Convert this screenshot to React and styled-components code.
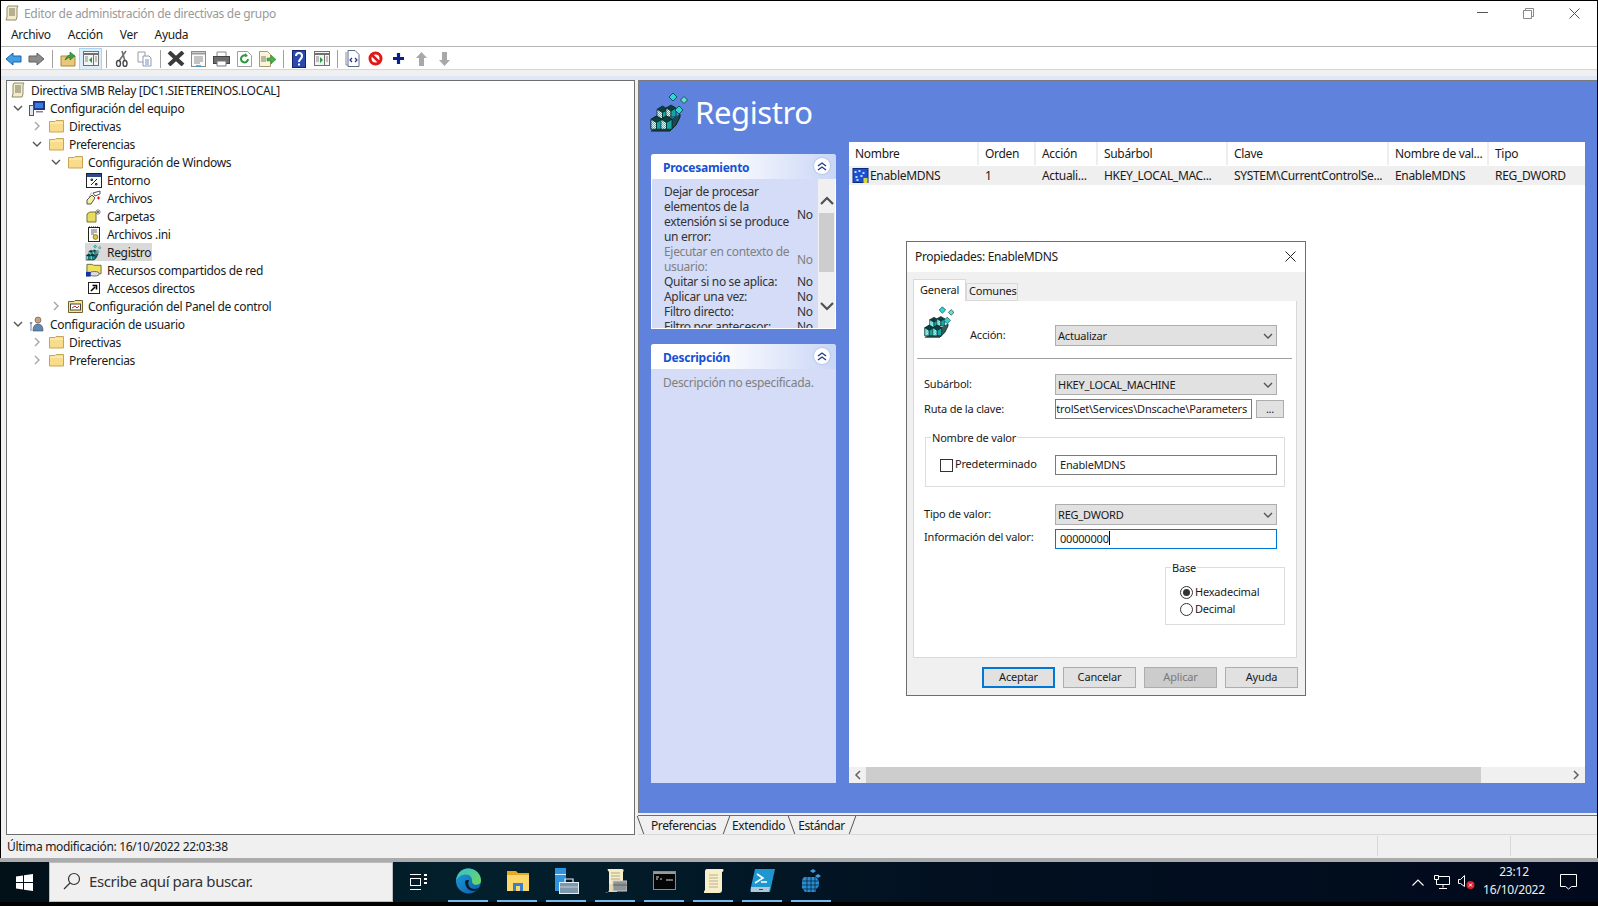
import React from "react";
import styled, { createGlobalStyle } from "styled-components";

const FONT = `"Noto Sans", "Open Sans", sans-serif`;

const Global = createGlobalStyle`
  html, body { margin: 0; padding: 0; background: #000; overflow: hidden; }
  * { box-sizing: border-box; }
  body { font-family: ${FONT}; font-size: 12px; color: #1a1a1a; }
`;

const Page = styled.div`
  position: relative;
  width: 1598px;
  height: 906px;
  background: #000;
  display: flex;
  flex-direction: column;
  letter-spacing: -0.32px;
`;

const Window = styled.div`
  height: 857px;
  margin: 1px 1px 0 1px;
  background: #f0f0f0;
  display: flex;
  flex-direction: column;
  flex: none;
`;

const TitleBar = styled.div`
  height: 23px;
  background: #fff;
  display: flex;
  align-items: center;
  padding: 1px 0 0 3px;
  gap: 4px;
  color: #999;
  flex: none;
`;

const WinControls = styled.div`
  margin-left: auto;
  display: flex;
  align-items: center;
`;

const WinControl = styled.div`
  width: 46px;
  display: flex;
  justify-content: center;
`;

const MenuBar = styled.div`
  height: 23px;
  background: #fff;
  border-bottom: 1px solid #b5b5b5;
  display: flex;
  align-items: center;
  padding: 0 0 2px 10px;
  gap: 17px;
  flex: none;
`;

const MenuItem = styled.span`
  font-size: 12px;
  color: #1a1a1a;
`;

const ToolBar = styled.div`
  height: 23px;
  background: #fff;
  border-bottom: 1px solid #d6d6d6;
  display: flex;
  align-items: center;
  padding: 1px 0 0 1px;
  flex: none;
`;

const ToolButton = styled.div`
  width: 23px;
  height: 22px;
  display: flex;
  align-items: center;
  justify-content: center;
  border: 1px solid ${(p) => (p.$active ? "#a8d4f5" : "transparent")};
  background: ${(p) => (p.$active ? "#dcedfb" : "transparent")};
`;

const ToolSep = styled.div`
  width: 1px;
  height: 18px;
  background: #a0a0a0;
  margin: 0 3px 0 4px;
`;

const Workspace = styled.div`
  height: 766px;
  flex: none;
  padding: 10px 0 0 5px;
  display: flex;
  background: linear-gradient(#f0f0f0 0 6px, #dfe8f4 6px 10px, #f0f0f0 10px);
`;

const TreePane = styled.div`
  width: 629px;
  height: 755px;
  background: #fff;
  border: 1px solid #6e6e6e;
  padding: 0 0 0 3px;
  flex: none;
`;

const TreeRowBox = styled.div`
  height: 18px;
  display: flex;
  align-items: center;
  padding-left: ${(p) => (p.$root ? 0 : p.$level * 19 + 3)}px;
  white-space: nowrap;
`;

const Chevron = styled.div`
  width: 10px;
  height: 18px;
  margin-right: 6px;
  display: flex;
  align-items: center;
  justify-content: center;
  flex: none;
`;

const TreeIconBox = styled.div`
  width: 16px;
  height: 16px;
  margin-right: 5px;
  display: flex;
  align-items: center;
  justify-content: center;
  flex: none;
`;

const SelectedWrap = styled.div`
  display: flex;
  align-items: center;
  height: 18px;
  margin-left: -1px;
  padding: 0 1px 0 1px;
  background: ${(p) => (p.$selected ? "#d9d9d9" : "transparent")};
`;

const RightColumn = styled.div`
  flex: 1;
  margin-left: 3px;
  display: flex;
  flex-direction: column;
`;

const BluePane = styled.div`
  height: 733px;
  border: 1px solid #7a7a7a;
  border-width: 1px 0 0 1px;
  background: #5f82dc;
  padding: 0 8px 0 11px;
  display: flex;
  flex-direction: column;
  flex: none;
`;

const Banner = styled.div`
  height: 61px;
  display: flex;
  align-items: center;
  gap: 5px;
  flex: none;
`;

const BannerTitle = styled.div`
  font-size: 31px;
  color: #fff;
  letter-spacing: -0.4px;
`;

const Columns = styled.div`
  display: flex;
  height: 641px;
  padding-left: 1px;
  flex: none;
`;

const Side = styled.div`
  width: 185px;
  padding-top: 12px;
  display: flex;
  flex-direction: column;
  gap: 15px;
  flex: none;
`;

const SideCard = styled.div`
  display: flex;
  flex-direction: column;
  height: ${(p) => p.$h}px;
  background: #d4dcf7;
  border-radius: 3px 3px 0 0;
  overflow: hidden;
  flex: none;
`;

const SideHeader = styled.div`
  height: 25px;
  background: linear-gradient(90deg, #fff 35%, #c9d6f6);
  display: flex;
  align-items: center;
  justify-content: space-between;
  padding: 2px 6px 0 12px;
  color: #1550d6;
  font-weight: 700;
  letter-spacing: -0.25px;
  flex: none;
`;

const Collapse = styled.div`
  width: 16px;
  height: 16px;
  border-radius: 50%;
  background: #fff;
  box-shadow: 0 0 2px #8aa0d8;
  display: flex;
  align-items: center;
  justify-content: center;
  margin-top: -4px;
`;

const SideBody = styled.div`
  flex: 1;
  display: flex;
  overflow: hidden;
  border-left: 1px solid #fff;
  border-right: 1px solid #fff;
  border-bottom: 1px solid #fff;
`;

const PropList = styled.div`
  width: 166px;
  padding: 5px 0 0 12px;
  line-height: 15px;
  overflow: hidden;
  flex: none;
`;

const PropRow = styled.div`
  display: flex;
  align-items: center;
  color: ${(p) => (p.$muted ? "#808080" : "#333")};
`;

const PropName = styled.div`
  width: 133px;
  flex: none;
`;

const SideScroll = styled.div`
  flex: 1;
  background: #f0f0f0;
  display: flex;
  flex-direction: column;
  align-items: center;
`;

const ScrollArrow = styled.div`
  height: 34px;
  display: flex;
  align-items: center;
  justify-content: center;
  flex: none;
  padding-top: ${(p) => p.$pt}px;
`;

const SideThumb = styled.div`
  width: 15px;
  height: 59px;
  background: #cdcdcd;
  flex: none;
`;

const DescText = styled.div`
  padding: 5px 0 0 12px;
  color: #808080;
`;

const ListPane = styled.div`
  width: 736px;
  margin-left: 13px;
  height: 641px;
  background: #fff;
  display: flex;
  flex-direction: column;
  flex: none;
`;

const COLS = "130px 57px 62px 130px 161px 100px 1fr";

const HeadGrid = styled.div`
  display: grid;
  grid-template-columns: ${COLS};
  height: 24px;
  padding-bottom: 1px;
  flex: none;
`;

const HeadCell = styled.div`
  display: flex;
  align-items: center;
  padding-left: 6px;
  border-right: 2px solid #eeeeee;
  white-space: nowrap;
  &:last-child { border-right: 0; }
`;

const DataGrid = styled.div`
  display: grid;
  grid-template-columns: ${COLS};
  height: 19px;
  background: #efefef;
  flex: none;
`;

const DataCell = styled.div`
  display: flex;
  align-items: center;
  padding-left: 6px;
  white-space: nowrap;
`;

const FirstCell = styled(DataCell)`
  padding-left: 3px;
  gap: 1px;
`;

const ListFill = styled.div`
  flex: 1;
`;

const HScroll = styled.div`
  height: 16px;
  background: #f0f0f0;
  display: flex;
  align-items: center;
  flex: none;
`;

const HArrow = styled.div`
  width: 17px;
  height: 16px;
  display: flex;
  align-items: center;
  justify-content: center;
  flex: none;
`;

const HThumb = styled.div`
  width: 615px;
  height: 16px;
  background: #cdcdcd;
`;

const Fill = styled.div`
  flex: 1;
`;

const TabStrip = styled.div`
  height: 20px;
  margin-top: 2px;
  border-top: 1px solid #6e6e6e;
  border-bottom: 1px solid #d8d8d8;
  display: flex;
  padding-left: 2px;
  letter-spacing: -0.4px;
  flex: none;
`;

const BottomTab = styled.div`
  position: relative;
  height: 18px;
  padding: 0 ${(p) => p.$pad}px;
  display: flex;
  align-items: center;
  &::before {
    content: "";
    position: absolute;
    right: -1px;
    top: 0;
    width: 1px;
    height: 18px;
    background: #555;
    transform: skewX(${(p) => p.$skew}deg);
  }
`;

const FirstTabEdge = styled.div`
  width: 1px;
  height: 18px;
  background: #555;
  transform: skewX(20deg);
  flex: none;
`;

const StatusBar = styled.div`
  height: 22px;
  display: flex;
  align-items: center;
  padding: 0 0 2px 6px;
  flex: none;
`;

const StatusSep = styled.div`
  width: 1px;
  height: 20px;
  background: #d8d8d8;
  margin-left: ${(p) => p.$ml}px;
`;

const Divider = styled.div`
  height: 4px;
  background: #ababab;
  flex: none;
`;

/* the taskbar */
const TaskBar = styled.div`
  height: 40px;
  background: linear-gradient(90deg, #021018, #02202c 30%, #021020 60%, #010a1c);
  display: flex;
  align-items: stretch;
  color: #fff;
  letter-spacing: 0;
  flex: none;
`;

const StartButton = styled.div`
  width: 49px;
  display: flex;
  align-items: center;
  justify-content: center;
  flex: none;
`;

const SearchBox = styled.div`
  width: 344px;
  background: #f0f0f0;
  border: 1px solid #bdbdbd;
  color: #333;
  display: flex;
  align-items: center;
  gap: 8px;
  padding: 0 0 2px 13px;
  font-size: 15px;
  letter-spacing: -0.42px;
  flex: none;
`;

const TaskViewBtn = styled.div`
  width: 51px;
  display: flex;
  align-items: center;
  justify-content: center;
  flex: none;
`;

const AppSlot = styled.div`
  position: relative;
  width: 49px;
  display: flex;
  align-items: center;
  justify-content: center;
  padding-bottom: 3px;
  flex: none;
  &::after {
    content: "";
    position: absolute;
    left: 4px;
    right: 5px;
    bottom: 0;
    height: 2px;
    background: #76b9ed;
  }
`;

const Tray = styled.div`
  margin-left: auto;
  display: flex;
  align-items: center;
  padding-right: 21px;
`;

const Clock = styled.div`
  width: 70px;
  text-align: center;
  font-size: 12px;
  line-height: 18px;
  letter-spacing: -0.2px;
  color: #eee;
  margin: 0 11px 2px 4px;
`;

const TrayIcon = styled.div`
  margin-right: ${(p) => p.$mr || 0}px;
  display: flex;
`;

/* the floating properties dialog */
const Dialog = styled.div`
  position: absolute;
  left: 906px;
  top: 241px;
  width: 400px;
  height: 455px;
  background: #f0f0f0;
  border: 1px solid #6e6e6e;
  display: flex;
  flex-direction: column;
`;

const DialogTitle = styled.div`
  height: 30px;
  background: #fff;
  display: flex;
  align-items: center;
  justify-content: space-between;
  padding: 0 9px 2px 8px;
  flex: none;
`;

const DialogTabs = styled.div`
  display: flex;
  align-items: flex-end;
  background: #f0f0f0;
  padding: 7px 0 0 6px;
  height: 29px;
  font-size: 11px;
  letter-spacing: -0.2px;
  flex: none;
  position: relative;
  z-index: 1;
`;

const DlgTab = styled.div`
  height: ${(p) => (p.$active ? 22 : 18)}px;
  width: ${(p) => (p.$active ? 53 : 52)}px;
  padding: ${(p) => (p.$active ? "0 0 3px 6px" : "0 0 3px 2px")};
  background: ${(p) => (p.$active ? "#fff" : "#f0f0f0")};
  border: 1px solid #d9d9d9;
  border-bottom: ${(p) => (p.$active ? "0" : "1px solid #d9d9d9")};
  display: flex;
  align-items: center;
`;

const DlgPage = styled.div`
  margin: -1px 8px 0 6px;
  height: 358px;
  background: #fff;
  border: 1px solid #d9d9d9;
  font-size: 11px;
  letter-spacing: -0.2px;
  flex: none;
`;

const FormRow = styled.div`
  display: flex;
  align-items: ${(p) => p.$align || "center"};
  margin-top: ${(p) => p.$mt}px;
  padding-left: 10px;
  height: ${(p) => p.$h}px;
`;

const FormLabel = styled.div`
  width: 131px;
  padding-bottom: 2px;
  flex: none;
  white-space: nowrap;
`;

const ActionLabel = styled.div`
  width: 85px;
  flex: none;
  margin-bottom: 4px;
  margin-left: 14px;
`;

const ActionIcon = styled.div`
  width: 32px;
  height: 36px;
  margin-bottom: 4px;
  flex: none;
`;

const SelectBox = styled.div`
  width: 222px;
  height: 21px;
  background: #e1e1e1;
  border: 1px solid #adadad;
  display: flex;
  align-items: center;
  justify-content: space-between;
  padding: 0 3px 0 2px;
  flex: none;
`;

const TextField = styled.div`
  width: ${(p) => p.$w}px;
  height: 20px;
  background: #fff;
  border: 1px solid ${(p) => (p.$focus ? "#0078d7" : "#7a7a7a")};
  display: flex;
  align-items: center;
  justify-content: ${(p) => (p.$end ? "flex-end" : "flex-start")};
  padding: 0 4px 2px 4px;
  overflow: hidden;
  white-space: nowrap;
  flex: none;
`;

const Caret = styled.span`
  width: 1px;
  height: 14px;
  background: #000;
`;

const DotsButton = styled.div`
  width: 28px;
  height: 18px;
  margin-left: 4px;
  background: #e1e1e1;
  border: 1px solid #adadad;
  display: flex;
  align-items: center;
  justify-content: center;
  padding-bottom: 2px;
`;

const Rule = styled.div`
  height: 1px;
  margin: 12px 4px 0 3px;
  background: #a0a0a0;
`;

const GroupBox = styled.div`
  position: relative;
  width: ${(p) => p.$w}px;
  height: ${(p) => p.$h}px;
  margin-top: ${(p) => p.$mt}px;
  margin-left: ${(p) => p.$ml}px;
  border: 1px solid #dcdcdc;
`;

const GroupLegend = styled.div`
  position: absolute;
  left: 5px;
  top: -8px;
  padding: 0 1px;
  background: #fff;
  line-height: 16px;
`;

const NameRow = styled.div`
  display: flex;
  align-items: center;
  padding: 17px 0 0 14px;
`;

const CheckBox = styled.div`
  width: 13px;
  height: 13px;
  border: 1px solid #333;
  background: #fff;
  flex: none;
`;

const CheckLabel = styled.div`
  width: 100px;
  margin-left: 2px;
  margin-top: -4px;
  flex: none;
`;

const RadioRow = styled.div`
  display: flex;
  align-items: center;
  height: 17px;
  gap: 2px;
  padding-left: 14px;
`;

const RadioLabel = styled.span`
  margin-top: -3px;
`;

const RadioStack = styled.div`
  padding-top: 16px;
`;

const Radio = styled.div`
  width: 13px;
  height: 13px;
  border-radius: 50%;
  border: 1px solid #333;
  background: #fff;
  display: flex;
  align-items: center;
  justify-content: center;
  flex: none;
`;

const RadioDot = styled.div`
  width: 7px;
  height: 7px;
  border-radius: 50%;
  background: #333;
`;

const ButtonRow = styled.div`
  display: flex;
  justify-content: flex-end;
  gap: 8px;
  padding: 9px 7px 0 0;
  font-size: 11px;
  letter-spacing: -0.15px;
`;

const DlgButton = styled.div`
  width: 73px;
  height: 21px;
  background: ${(p) => (p.$disabled ? "#cccccc" : "#e1e1e1")};
  border: ${(p) => (p.$primary ? "2px solid #0078d7" : "1px solid #adadad")};
  color: ${(p) => (p.$disabled ? "#7a7a7a" : "#1a1a1a")};
  display: flex;
  align-items: center;
  justify-content: center;
  padding-bottom: 3px;
`;

/* drawings */
const ChevronDown = ({ size = 10, color = "#555" }) => (
  <svg width={size} height={size} viewBox="0 0 10 10"><path d="M1 3l4 4 4-4" fill="none" stroke={color} strokeWidth="1.4" /></svg>
);
const ChevronRight = ({ color = "#a6a6a6" }) => (
  <svg width="10" height="10" viewBox="0 0 10 10"><path d="M3 1l4 4-4 4" fill="none" stroke={color} strokeWidth="1.4" /></svg>
);

const Folder = () => (
  <svg width="15" height="14" viewBox="0 0 15 14">
    <path d="M.5 2.500V13h14V1.500H7L6 2.500z" fill="#f8dc8c" stroke="#c8a552" />
    <path d="M1 4h13" stroke="#fff3c8" />
  </svg>
);

const Scroll = ({ w = 16, h = 16 }) => (
  <svg width={w} height={h} viewBox="0 0 16 16">
    <path d="M4 1h10l-1 2v9l-1 3H2l1-3V3z" fill="#f4ecc8" stroke="#8f8a6a" />
    <path d="M5 4h6M5 6h6M5 8h6M5 10h6" stroke="#77745f" />
  </svg>
);

const Cube = ({ x, y, s = 10 }) => (
  <g stroke="#04201f" strokeWidth="0.7">
    <path d={`M${x} ${y + s * 0.3}L${x + s * 0.5} ${y}L${x + s} ${y + s * 0.3}L${x + s * 0.5} ${y + s * 0.6}Z`} fill="#0d3f40" />
    <path d={`M${x} ${y + s * 0.3}L${x + s * 0.5} ${y + s * 0.6}V${y + s * 1.2}H${x}Z`} fill="url(#regDither)" />
    <path d={`M${x + s} ${y + s * 0.3}L${x + s * 0.5} ${y + s * 0.6}V${y + s * 1.2}H${x + s}Z`} fill="#12a5a2" />
  </g>
);

const Diamond = ({ x, y, s = 7, fill = "#2fd6d2" }) => (
  <path d={`M${x} ${y - s / 2}L${x + s / 2} ${y}L${x} ${y + s / 2}L${x - s / 2} ${y}Z`} fill={fill} stroke="#0a4a4c" strokeWidth="0.9" />
);

const Registry = ({ size = 40 }) => (
  <svg width={size} height={size} viewBox="0 0 40 40">
    <defs>
      <pattern id="regDither" width="2" height="2" patternUnits="userSpaceOnUse">
        <rect width="2" height="2" fill="#27c9c4" />
        <rect width="1" height="1" fill="#d6fbf8" />
        <rect x="1" y="1" width="1" height="1" fill="#d6fbf8" />
      </pattern>
    </defs>
    <Cube x={7} y={14} s={11} />
    <Cube x={16} y={13} s={10} />
    <Cube x={1} y={24} s={11} />
    <Cube x={11} y={24} s={11} />
    <path d="M1 39h19l6-6 4-8V22" fill="#0d3f40" fillOpacity=".85" stroke="#04201f" strokeWidth="1" />
    <Cube x={1} y={24} s={11} />
    <Cube x={11} y={24} s={11} />
    <Diamond x={29} y={18} s={8} />
    <Diamond x={23} y={5} s={8} />
    <Diamond x={34} y={8} s={7} fill="#6fdccd" />
  </svg>
);

const RegValueIcon = () => (
  <svg width="17" height="16" viewBox="0 0 16 16">
    <rect x="0.5" y="0.5" width="15" height="14" fill="#1d4fd0" stroke="#0c2a80" />
    <path d="M2 3h2v2H2zM6 2h2v2H6zM10 4h2v2h-2zM3 8h2v2H3zM8 7h2v2H8zM4 11h2v2H4z" fill="#b8e0f8" />
    <path d="M11 10h4v5h-4z" fill="#d6d84a" />
  </svg>
);

const ComputerIcon = () => (
  <svg width="16" height="16" viewBox="0 0 16 16">
    <rect x="4.500" y="1.500" width="11" height="8" fill="#1d3f9c" stroke="#24345c" />
    <rect x="6" y="3" width="8" height="5" fill="#3a7be0" />
    <path d="M7 11h7v1.500H7z" fill="#7d8696" />
    <rect x="0.5" y="5.500" width="4" height="10" fill="#dfe6f0" stroke="#556" />
  </svg>
);

const UserIcon = () => (
  <svg width="16" height="16" viewBox="0 0 16 16">
    <circle cx="9" cy="4" r="3" fill="#c9a27a" stroke="#555" strokeWidth=".6" />
    <path d="M4 15c0-5 2-7 5-7s5 2 5 7z" fill="#5d88b5" stroke="#445" strokeWidth=".6" />
    <path d="M2 6v9M1 6l1 2 1-2" stroke="#6b88a8" fill="none" />
  </svg>
);

const EnvIcon = () => (
  <svg width="16" height="15" viewBox="0 0 16 15">
    <rect x=".5" y=".5" width="15" height="14" fill="#fff" stroke="#222" />
    <rect x="1" y="1" width="14" height="3" fill="#2d4a8a" />
    <path d="M5 12l6-6M5 6h1.500v1.500H5zM9.500 10.500H11V12H9.500z" fill="none" stroke="#222" />
  </svg>
);

const FilesIcon = () => (
  <svg width="16" height="16" viewBox="0 0 16 16">
    <path d="M1 10l5-5 3 3-4 6H1z" fill="#f5f0a0" stroke="#555" />
    <path d="M7 3l7-2v3l-5 2z" fill="#fff" stroke="#555" />
    <path d="M11 8h3M12.500 6.500v3" stroke="#e01010" strokeWidth="1.2" />
    <path d="M3 7l3-5" stroke="#777" strokeDasharray="1 1" />
  </svg>
);

const FoldersIcon = () => (
  <svg width="16" height="16" viewBox="0 0 16 16">
    <path d="M1 6l3-2h6v10H1z" fill="#e8dc60" stroke="#7a7030" />
    <path d="M12 1v6M9 4h6M10 2l4 4M14 2l-4 4" stroke="#666" strokeWidth=".8" />
  </svg>
);

const IniIcon = () => (
  <svg width="14" height="16" viewBox="0 0 14 16">
    <rect x="1.500" y="1.500" width="11" height="14" fill="#fff" stroke="#222" />
    <path d="M2 1h10" stroke="#222" strokeDasharray="1 1" />
    <path d="M4 4h6M4 6h6M4 8h3" stroke="#666" />
    <circle cx="8.500" cy="11" r="2.400" fill="#e0c83c" stroke="#6a5c10" strokeWidth=".7" />
  </svg>
);

const ShareIcon = () => (
  <svg width="17" height="16" viewBox="0 0 17 16">
    <path d="M1 2h6l1 1h8v9H1z" fill="#f0e060" stroke="#6a6a30" />
    <ellipse cx="9" cy="12" rx="5" ry="2.400" fill="#ddd" stroke="#666" />
    <rect x="0" y="10" width="5" height="5" fill="#1430a8" />
  </svg>
);

const ShortcutIcon = () => (
  <svg width="12" height="12" viewBox="0 0 12 12">
    <rect x=".5" y=".5" width="11" height="11" fill="#fff" stroke="#222" />
    <path d="M3 9l4-4M4.500 3.500H8.500V7.500" fill="none" stroke="#000" strokeWidth="1.6" />
  </svg>
);

const ControlPanelIcon = () => (
  <svg width="15" height="14" viewBox="0 0 15 14">
    <path d="M.5 2.500V13.500h14V1.500H7l-1 1z" fill="#f4e79c" stroke="#6f6326" />
    <rect x="2.500" y="5" width="10" height="6" fill="#fff" stroke="#444" />
    <path d="M4 9l3-2 2 2 2-2" stroke="#c02020" fill="none" />
  </svg>
);

const ArrowIcon = ({ dir, fill, stroke }) => (
  <svg width="17" height="14" viewBox="0 0 17 14">
    <path d={dir === "l" ? "M1 7l7-6v3h8v6H8v3z" : "M16 7L9 1v3H1v6h8v3z"} fill={fill} stroke={stroke} />
  </svg>
);

const UpFolderTool = () => (
  <svg width="16" height="16" viewBox="0 0 16 16">
    <path d="M1 5h14v10H1z" fill="#eac77a" stroke="#a98838" />
    <path d="M5 9c1-3 3-5 5-5V1l5 4-5 4V6.500C8 6.500 7 8 5 9z" fill="#3fa03f" stroke="#1e6e1e" strokeWidth=".6" />
  </svg>
);

const PaneTool = ({ arrow = "l" }) => (
  <svg width="16" height="15" viewBox="0 0 16 15">
    <rect x=".5" y=".5" width="15" height="14" fill="#f4f4f4" stroke="#707070" />
    <path d="M1 3h14" stroke="#707070" strokeWidth="2" />
    <path d="M10.500 4v10" stroke="#707070" />
    <path d="M2 6h3M2 8h3M2 10h3M12 6h2M12 8h2M12 10h2" stroke="#888" />
    <path d={arrow === "l" ? "M9 6v6L6 9z" : "M6 6v6l3-3z"} fill="#209a3a" />
  </svg>
);

const CutTool = () => (
  <svg width="13" height="17" viewBox="0 0 13 17">
    <path d="M11 1L4 11M7 1l3 10" stroke="#707070" strokeWidth="1.6" />
    <ellipse cx="3.500" cy="13.500" rx="2" ry="3" fill="none" stroke="#444" strokeWidth="1.4" />
    <ellipse cx="10" cy="13.500" rx="2" ry="3" fill="none" stroke="#444" strokeWidth="1.4" />
  </svg>
);

const CopyTool = () => (
  <svg width="16" height="16" viewBox="0 0 16 16">
    <path d="M1 1h7v10H1z" fill="#fff" stroke="#9a9a9a" />
    <path d="M6 5h6l2 2v8H6z" fill="#fff" stroke="#8a9ab0" />
    <path d="M8 9h4M8 11h4M8 13h4" stroke="#7090c0" />
  </svg>
);

const DeleteTool = () => (
  <svg width="18" height="15" viewBox="0 0 18 15"><path d="M2 1l14 13M16 1L2 14" stroke="#3a3a3a" strokeWidth="4" /></svg>
);

const PropsTool = () => (
  <svg width="15" height="16" viewBox="0 0 15 16">
    <rect x=".5" y=".5" width="14" height="15" fill="#fbfbfb" stroke="#8a8a8a" />
    <path d="M1 2.500h13" stroke="#9a9a9a" strokeWidth="2" />
    <path d="M3 6h9M3 8h9M3 10h9M3 12h6" stroke="#8a8a8a" />
    <path d="M5 15h5" stroke="#28a0d8" strokeWidth="1.5" />
  </svg>
);

const PrintTool = () => (
  <svg width="17" height="16" viewBox="0 0 17 16">
    <path d="M4 1h9v5H4z" fill="#fff" stroke="#888" />
    <rect x=".5" y="5.500" width="16" height="7" fill="#6d6d6d" stroke="#444" />
    <path d="M4 10h9v5H4z" fill="#fff" stroke="#777" />
  </svg>
);

const RefreshTool = () => (
  <svg width="15" height="16" viewBox="0 0 15 16">
    <path d="M.5.500h10l4 4v11H.5z" fill="#fff" stroke="#a0a0a0" />
    <path d="M11 8a3.500 3.500 0 1 1-1.500-3" fill="none" stroke="#2a9a3a" strokeWidth="2" />
    <path d="M8 2l3 3-3 1z" fill="#2a9a3a" />
  </svg>
);

const ExportTool = () => (
  <svg width="17" height="16" viewBox="0 0 17 16">
    <path d="M.5.500h8l3 3v12H.5z" fill="#fbf5d8" stroke="#a59a70" />
    <path d="M2 6h5M2 8h5M2 10h5" stroke="#777" />
    <path d="M8 7h4V4l5 4.500L12 13v-3H8z" fill="#48b048" stroke="#2a7a2a" strokeWidth=".5" />
  </svg>
);

const HelpTool = () => (
  <svg width="14" height="18" viewBox="0 0 14 18">
    <rect x=".5" y=".5" width="13" height="17" fill="#2a4ab0" stroke="#15246c" />
    <path d="M4 6c0-4 6-4 6 0 0 3-3 3-3 6" fill="none" stroke="#fff" strokeWidth="2" />
    <path d="M6 13.500h2v2H6z" fill="#fff" />
  </svg>
);

const DocTool = () => (
  <svg width="15" height="17" viewBox="0 0 15 17">
    <path d="M3 .500h7l4 4v12H3z" fill="#fff" stroke="#5a6a8a" />
    <path d="M1 2v13h2" fill="none" stroke="#8a8a9a" />
    <path d="M7 8l-2 2 2 2M10 8l2 2-2 2" fill="none" stroke="#1430a0" strokeWidth="1.2" />
  </svg>
);

const StopTool = () => (
  <svg width="15" height="15" viewBox="0 0 15 15">
    <circle cx="7.500" cy="7.500" r="5.500" fill="#fff" stroke="#e01818" strokeWidth="3" />
    <path d="M4 4l7 7" stroke="#e01818" strokeWidth="2.500" />
  </svg>
);

const PlusTool = () => (
  <svg width="11" height="11" viewBox="0 0 11 11"><path d="M5.500 0v11M0 5.500h11" stroke="#0c1e8c" strokeWidth="3.200" /></svg>
);

const MoveTool = ({ up }) => (
  <svg width="11" height="14" viewBox="0 0 11 14">
    <path d={up ? "M5.500 0L11 6H8v8H3V6H0z" : "M5.500 14L11 8H8V0H3v8H0z"} fill="#a8a8a8" />
  </svg>
);

const ScrollChevron = ({ up }) => (
  <svg width="14" height="10" viewBox="0 0 14 10">
    <path d={up ? "M1 8l6-6 6 6" : "M1 2l6 6 6-6"} fill="none" stroke="#505050" strokeWidth="2.200" />
  </svg>
);

const CollapseIcon = () => (
  <svg width="10" height="10" viewBox="0 0 10 10">
    <path d="M1 5l4-3 4 3M1 9l4-3 4 3" fill="none" stroke="#1f3f90" strokeWidth="1.400" />
  </svg>
);

const WindowsLogo = () => (
  <svg width="17" height="17" viewBox="0 0 17 17" fill="#fff">
    <path d="M0 2.400l7-1v6.600H0zM8 1.200L17 0v8H8zM0 9h7v6.600l-7-1zM8 9h9v8l-9-1.200z" />
  </svg>
);

const SearchGlyph = () => (
  <svg width="18" height="18" viewBox="0 0 18 18">
    <circle cx="11" cy="7" r="5.500" fill="none" stroke="#333" strokeWidth="1.200" />
    <path d="M7 11l-6 6" stroke="#333" strokeWidth="1.200" />
  </svg>
);

const TaskViewGlyph = () => (
  <svg width="17" height="18" viewBox="0 0 17 18" fill="none" stroke="#fff">
    <path d="M0 1.500h11M0 16.500h11" />
    <rect x=".5" y="5.500" width="10" height="7" />
    <path d="M14 2h3M14 6h3M14 10h3" strokeWidth="2" />
  </svg>
);

const EdgeIcon = () => (
  <svg width="25" height="26" viewBox="0 0 25 26">
    <defs>
      <linearGradient id="edgeA" x1="0" y1="0" x2="1" y2="1">
        <stop offset="0" stopColor="#1f9fd8" />
        <stop offset="1" stopColor="#0a5cb0" />
      </linearGradient>
      <linearGradient id="edgeB" x1="0" y1="0" x2="1" y2="1">
        <stop offset="0" stopColor="#35c0d0" />
        <stop offset="1" stopColor="#70d858" />
      </linearGradient>
    </defs>
    <circle cx="12.500" cy="13" r="12.500" fill="url(#edgeA)" />
    <path d="M12 .500c8 0 13 6 13 12 0 4-4 5-7 4-2-1-2-3-2-4 0-3-2-6-6-6-4 0-8 2-10 6C1 6 5 .500 12 .500z" fill="url(#edgeB)" />
    <path d="M9 14c0 5 4 9 8 9 3 0 4-1 6-3-2 1-8 2-10-2-1-2-1-3 0-6-2 0-4 0-4 2z" fill="#02202c" />
  </svg>
);

const ExplorerIcon = () => (
  <svg width="22" height="20" viewBox="0 0 22 20">
    <path d="M0 0h9l2 2h11v18H0z" fill="#e8a820" />
    <path d="M0 4h22v16H0z" fill="#fcd86c" />
    <rect x="6" y="12" width="10" height="8" fill="#3a80c8" />
    <rect x="9" y="15" width="4" height="5" fill="#fcd86c" />
  </svg>
);

const ServerIcon = () => (
  <svg width="24" height="26" viewBox="0 0 24 26">
    <rect x="0" y="0" width="11" height="23" fill="#2e94e0" />
    <path d="M0 6.500h11" stroke="#d8f0ff" />
    <rect x="4.500" y="14.500" width="19" height="11" fill="#7f97ad" stroke="#e4ecf4" />
    <path d="M10 14v-3h8v3" fill="none" stroke="#e4ecf4" strokeWidth="1.200" />
    <path d="M5 19h18" stroke="#c0ced8" />
  </svg>
);

const CmdIcon = () => (
  <svg width="23" height="19" viewBox="0 0 23 19">
    <rect x=".5" y=".5" width="22" height="18" fill="#050505" stroke="#8a8a8a" />
    <rect x="1" y="1" width="21" height="2" fill="#999" />
    <path d="M3 6h3M3 8h2M7 8h2M13 9h7" stroke="#ddd" />
  </svg>
);

const PsIcon = () => (
  <svg width="25" height="23" viewBox="0 0 25 23">
    <path d="M5 0h20l-5 23H2c-2 0-2-1-1.500-3z" fill="#1e96cf" />
    <path d="M7 5l6 4-8 5M11 13h6" fill="none" stroke="#fff" strokeWidth="1.600" />
    <path d="M1 18h19l-1 5H1z" fill="#b3c8d2" />
    <path d="M9 20.500h4" stroke="#445" />
  </svg>
);

const ToolGpmc = () => (
  <svg width="23" height="24" viewBox="0 0 23 24">
    <path d="M4 0h14c2 0 2 2 1 3v12H5V3C4 2 3 0 4 0z" fill="#f7ecc4" />
    <path d="M7 4h9M7 7h9M7 10h9" stroke="#b0a88a" />
    <path d="M5 15v6c0 2-2 3-4 2h12v-8z" fill="#ead9a6" />
    <rect x="9" y="12" width="14" height="10" fill="#8f9496" stroke="#c8c8c8" />
    <path d="M9 16h14" stroke="#5f6466" />
  </svg>
);

const NotesIcon = () => (
  <svg width="20" height="24" viewBox="0 0 20 24">
    <path d="M3 0h15c2 0 2 2 0 3v18c0 2-1 3-3 3H1c-2 0-1-2 0-3V3C1 2 1 0 3 0z" fill="#f8eec8" />
    <path d="M5 6h9M5 9h9M5 12h9M5 15h9M5 18h9" stroke="#b8b090" />
  </svg>
);

const RegTaskIcon = () => (
  <svg width="20" height="23" viewBox="0 0 20 23">
    <path d="M11 0l3 2-3 2-3-2zM16 5l3 2-3 2-3-2z" fill="#3aa0e0" />
    <path d="M2 8h12l3 4v5l-3 3v3H3l-3-4v-8z" fill="#2a8cd4" />
    <path d="M5 8v15M9 8v15M13 8v15M0 12h17M0 16h17M0 20h14" stroke="#02202c" strokeWidth=".7" />
  </svg>
);

const TrayChevron = () => (
  <svg width="12" height="7" viewBox="0 0 12 7"><path d="M.5 6.500L6 1l5.500 5.500" fill="none" stroke="#fff" strokeWidth="1.100" /></svg>
);

const NetworkGlyph = () => (
  <svg width="16" height="14" viewBox="0 0 16 14" fill="none" stroke="#fff">
    <path d="M.5 .500h4v4h-4zM4.500 1.500H15.500v8H2.500V4.500M9 9.500v3M5 13.500h8" />
  </svg>
);

const SoundMuted = () => (
  <svg width="17" height="14" viewBox="0 0 17 14">
    <path d="M.5 4.500h2L6.500.5v11l-4-3h-2z" fill="none" stroke="#fff" />
    <circle cx="12.500" cy="10" r="4" fill="#e02030" />
    <path d="M11 8.500l3 3M14 8.500l-3 3" stroke="#fff" />
  </svg>
);

const NotifyGlyph = () => (
  <svg width="17" height="16" viewBox="0 0 17 16">
    <path d="M.5 .500h16v12h-5L8.500 15 5.500 12.500h-5z" fill="none" stroke="#fff" />
  </svg>
);

const CloseGlyph = ({ size = 11, color = "#333" }) => (
  <svg width={size} height={size} viewBox="0 0 11 11"><path d="M.5 .500l10 10M10.500 .500l-10 10" stroke={color} /></svg>
);

const TOOLS = [
  [<ArrowIcon key="b" dir="l" fill="#3fa0e8" stroke="#1a62a8" />, <ArrowIcon key="f" dir="r" fill="#8c8c8c" stroke="#606060" />],
  [<UpFolderTool key="u" />, <PaneTool key="p" />],
  [<CutTool key="c" />, <CopyTool key="cp" />],
  [<DeleteTool key="d" />, <PropsTool key="pr" />, <PrintTool key="pt" />, <RefreshTool key="r" />, <ExportTool key="e" />],
  [<HelpTool key="h" />, <PaneTool key="a" arrow="r" />],
  [<DocTool key="dc" />, <StopTool key="s" />, <PlusTool key="pl" />, <MoveTool key="mu" up />, <MoveTool key="md" />],
];

const TREE = [
  { level: 0, label: "Directiva SMB Relay [DC1.SIETEREINOS.LOCAL]", icon: <Scroll />, root: true },
  { level: 0, label: "Configuración del equipo", icon: <ComputerIcon />, open: true },
  { level: 1, label: "Directivas", icon: <Folder />, open: false },
  { level: 1, label: "Preferencias", icon: <Folder />, open: true },
  { level: 2, label: "Configuración de Windows", icon: <Folder />, open: true },
  { level: 3, label: "Entorno", icon: <EnvIcon /> },
  { level: 3, label: "Archivos", icon: <FilesIcon /> },
  { level: 3, label: "Carpetas", icon: <FoldersIcon /> },
  { level: 3, label: "Archivos .ini", icon: <IniIcon /> },
  { level: 3, label: "Registro", icon: <Registry size={17} />, selected: true },
  { level: 3, label: "Recursos compartidos de red", icon: <ShareIcon /> },
  { level: 3, label: "Accesos directos", icon: <ShortcutIcon /> },
  { level: 2, label: "Configuración del Panel de control", icon: <ControlPanelIcon />, open: false },
  { level: 0, label: "Configuración de usuario", icon: <UserIcon />, open: true },
  { level: 1, label: "Directivas", icon: <Folder />, open: false },
  { level: 1, label: "Preferencias", icon: <Folder />, open: false },
];

const PROPS = [
  ["Dejar de procesar elementos de la extensión si se produce un error:", "No"],
  ["Ejecutar en contexto de usuario:", "No", true],
  ["Quitar si no se aplica:", "No"],
  ["Aplicar una vez:", "No"],
  ["Filtro directo:", "No"],
  ["Filtro por antecesor:", "No"],
];

const HEADERS = ["Nombre", "Orden", "Acción", "Subárbol", "Clave", "Nombre de val...", "Tipo"];
const CELLS = ["1", "Actuali...", "HKEY_LOCAL_MAC...", "SYSTEM\\CurrentControlSe...", "EnableMDNS", "REG_DWORD"];
const APPS = [<EdgeIcon key="1" />, <ExplorerIcon key="2" />, <ServerIcon key="3" />, <ToolGpmc key="4" />, <CmdIcon key="5" />, <NotesIcon key="6" />, <PsIcon key="7" />, <RegTaskIcon key="8" />];

const TreeRow = ({ item }) => (
  <TreeRowBox $level={item.level} $root={item.root}>
    {!item.root && (
      <Chevron>{item.open === undefined ? null : item.open ? <ChevronDown /> : <ChevronRight />}</Chevron>
    )}
    <SelectedWrap $selected={item.selected}>
      <TreeIconBox>{item.icon}</TreeIconBox>
      {item.label}
    </SelectedWrap>
  </TreeRowBox>
);

const App = () => (
  <Page>
    <Global />
    <Window>
      <TitleBar>
        <Scroll />
        Editor de administración de directivas de grupo
        <WinControls>
          <WinControl><svg width="11" height="2"><path d="M0 .5h11" stroke="#555" /></svg></WinControl>
          <WinControl><svg width="11" height="11"><path d="M.5 2.500h8v8h-8zM2.500 2.500v-2h8v8h-2" fill="none" stroke="#888" /></svg></WinControl>
          <WinControl><CloseGlyph color="#555" /></WinControl>
        </WinControls>
      </TitleBar>
      <MenuBar>
        {["Archivo", "Acción", "Ver", "Ayuda"].map((m) => <MenuItem key={m}>{m}</MenuItem>)}
      </MenuBar>
      <ToolBar>
        {TOOLS.map((group, i) => (
          <React.Fragment key={i}>
            {i > 0 && <ToolSep />}
            {group.map((t, j) => <ToolButton key={j} $active={i === 1 && j === 1}>{t}</ToolButton>)}
          </React.Fragment>
        ))}
      </ToolBar>
      <Workspace>
        <TreePane>
          {TREE.map((item, i) => <TreeRow key={i} item={item} />)}
        </TreePane>
        <RightColumn>
          <BluePane>
            <Banner>
              <Registry size={40} />
              <BannerTitle>Registro</BannerTitle>
            </Banner>
            <Columns>
              <Side>
                <SideCard $h={175}>
                  <SideHeader>Procesamiento<Collapse><CollapseIcon /></Collapse></SideHeader>
                  <SideBody>
                    <PropList>
                      {PROPS.map(([name, value, muted]) => (
                        <PropRow key={name} $muted={muted}>
                          <PropName>{name}</PropName>
                          {value}
                        </PropRow>
                      ))}
                    </PropList>
                    <SideScroll>
                      <ScrollArrow $pt={10}><ScrollChevron up /></ScrollArrow>
                      <SideThumb />
                      <ScrollArrow $pt={34}><ScrollChevron /></ScrollArrow>
                    </SideScroll>
                  </SideBody>
                </SideCard>
                <SideCard $h={439}>
                  <SideHeader>Descripción<Collapse><CollapseIcon /></Collapse></SideHeader>
                  <DescText>Descripción no especificada.</DescText>
                </SideCard>
              </Side>
              <ListPane>
                <HeadGrid>
                  {HEADERS.map((h) => <HeadCell key={h}>{h}</HeadCell>)}
                </HeadGrid>
                <DataGrid>
                  <FirstCell><RegValueIcon />EnableMDNS</FirstCell>
                  {CELLS.map((c) => <DataCell key={c}>{c}</DataCell>)}
                </DataGrid>
                <ListFill />
                <HScroll>
                  <HArrow><svg width="7" height="10"><path d="M6 1L2 5l4 4" fill="none" stroke="#606060" strokeWidth="1.500" /></svg></HArrow>
                  <HThumb />
                  <Fill />
                  <HArrow><svg width="7" height="10"><path d="M1 1l4 4-4 4" fill="none" stroke="#606060" strokeWidth="1.500" /></svg></HArrow>
                </HScroll>
              </ListPane>
            </Columns>
          </BluePane>
          <TabStrip>
            <FirstTabEdge />
            <BottomTab $pad={10} $skew={-20}>Preferencias</BottomTab>
            <BottomTab $pad={6} $skew={20}>Extendido</BottomTab>
            <BottomTab $pad={7} $skew={-20}>Estándar</BottomTab>
          </TabStrip>
        </RightColumn>
      </Workspace>
      <StatusBar>
        Última modificación: 16/10/2022 22:03:38
        <StatusSep $ml={1149} />
        <StatusSep $ml={132} />
      </StatusBar>
    </Window>
    <Divider />
    <TaskBar>
      <StartButton><WindowsLogo /></StartButton>
      <SearchBox><SearchGlyph />Escribe aquí para buscar.</SearchBox>
      <TaskViewBtn><TaskViewGlyph /></TaskViewBtn>
      {APPS.map((a, i) => <AppSlot key={i}>{a}</AppSlot>)}
      <Tray>
        <TrayIcon $mr={10}><TrayChevron /></TrayIcon>
        <TrayIcon $mr={8}><NetworkGlyph /></TrayIcon>
        <TrayIcon><SoundMuted /></TrayIcon>
        <Clock>23:12<br />16/10/2022</Clock>
        <NotifyGlyph />
      </Tray>
    </TaskBar>

    <Dialog>
      <DialogTitle>Propiedades: EnableMDNS<CloseGlyph size={11} color="#222" /></DialogTitle>
      <DialogTabs>
        <DlgTab $active>General</DlgTab>
        <DlgTab>Comunes</DlgTab>
      </DialogTabs>
      <DlgPage>
        <FormRow $mt={9} $h={36} $align="flex-end">
          <ActionIcon><Registry size={32} /></ActionIcon>
          <ActionLabel>Acción:</ActionLabel>
          <SelectBox>Actualizar<ChevronDown /></SelectBox>
        </FormRow>
        <Rule />
        <FormRow $mt={15} $h={21}>
          <FormLabel>Subárbol:</FormLabel>
          <SelectBox>HKEY_LOCAL_MACHINE<ChevronDown /></SelectBox>
        </FormRow>
        <FormRow $mt={4} $h={20}>
          <FormLabel>Ruta de la clave:</FormLabel>
          <TextField $w={197} $end>trolSet\Services\Dnscache\Parameters</TextField>
          <DotsButton>...</DotsButton>
        </FormRow>
        <GroupBox $w={360} $h={50} $mt={18} $ml={11}>
          <GroupLegend>Nombre de valor</GroupLegend>
          <NameRow>
            <CheckBox />
            <CheckLabel>Predeterminado</CheckLabel>
            <TextField $w={222}>EnableMDNS</TextField>
          </NameRow>
        </GroupBox>
        <FormRow $mt={17} $h={21}>
          <FormLabel>Tipo de valor:</FormLabel>
          <SelectBox>REG_DWORD<ChevronDown /></SelectBox>
        </FormRow>
        <FormRow $mt={4} $h={20} $align="flex-start">
          <FormLabel>Información del valor:</FormLabel>
          <TextField $w={222} $focus>00000000<Caret /></TextField>
        </FormRow>
        <GroupBox $w={120} $h={58} $mt={18} $ml={251}>
          <GroupLegend>Base</GroupLegend>
          <RadioStack>
            <RadioRow><Radio><RadioDot /></Radio><RadioLabel>Hexadecimal</RadioLabel></RadioRow>
            <RadioRow><Radio /><RadioLabel>Decimal</RadioLabel></RadioRow>
          </RadioStack>
        </GroupBox>
      </DlgPage>
      <ButtonRow>
        <DlgButton $primary>Aceptar</DlgButton>
        <DlgButton>Cancelar</DlgButton>
        <DlgButton $disabled>Aplicar</DlgButton>
        <DlgButton>Ayuda</DlgButton>
      </ButtonRow>
    </Dialog>
  </Page>
);

export default App;
